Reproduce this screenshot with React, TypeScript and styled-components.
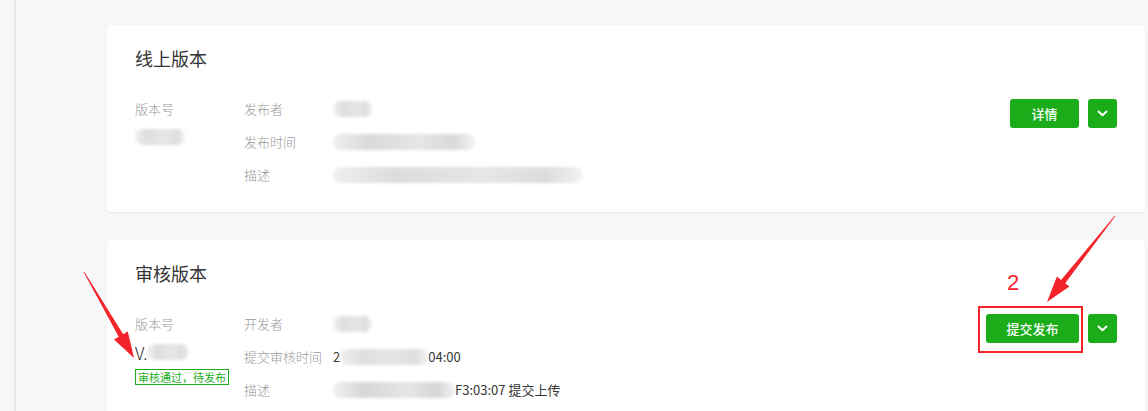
import styled, { createGlobalStyle } from "styled-components";

const GlobalStyle = createGlobalStyle`
  html, body {
    margin: 0;
    padding: 0;
    background: #f6f7f9;
    font-family: "Noto Sans CJK SC", "Noto Sans", sans-serif;
    overflow: hidden;
  }
`;

interface IBlurProps {
  $w: number;
  $shade?: string;
}

interface IRow {
  label: string;
  value: React.ReactNode;
}

// builds a tapered annotation arrow from tail to tip
const arrowPoints = (x1: number, y1: number, x2: number, y2: number) => {
  const dx = x2 - x1;
  const dy = y2 - y1;
  const len = Math.sqrt(dx * dx + dy * dy);
  const ux = dx / len;
  const uy = dy / len;
  const nx = -uy;
  const ny = ux;
  const headLen = 26;
  const headW = 8;
  const shaftW = 2.6;
  const bx = x2 - ux * headLen;
  const by = y2 - uy * headLen;
  const pts = [
    [x1 + nx * 0.4, y1 + ny * 0.4],
    [bx + nx * shaftW, by + ny * shaftW],
    [bx + nx * headW, by + ny * headW],
    [x2, y2],
    [bx - nx * headW, by - ny * headW],
    [bx - nx * shaftW, by - ny * shaftW],
    [x1 - nx * 0.4, y1 - ny * 0.4],
  ];
  return pts.map((p) => p[0].toFixed(1) + "," + p[1].toFixed(1)).join(" ");
};

const Chevron = () => (
  <svg width="11" height="7" viewBox="0 0 11 7">
    <path
      d="M1.5 1.5 L5.5 5.3 L9.5 1.5"
      stroke="#fff"
      strokeWidth="2"
      fill="none"
      strokeLinecap="round"
      strokeLinejoin="round"
    />
  </svg>
);

const VersionCard = ({
  title,
  version,
  tag,
  rows,
  action,
  marked,
}: {
  title: string;
  version: React.ReactNode;
  tag?: string;
  rows: IRow[];
  action: string;
  marked?: boolean;
}) => (
  <Card>
    <CardTitle>{title}</CardTitle>
    <CardBody>
      <VersionCol>
        <Label>版本号</Label>
        <VersionValue>{version}</VersionValue>
        {tag && <StatusTag>{tag}</StatusTag>}
      </VersionCol>
      <InfoGrid>
        {rows.map((r) => (
          <InfoRow key={r.label}>
            <Label>{r.label}</Label>
            <Value>{r.value}</Value>
          </InfoRow>
        ))}
      </InfoGrid>
      <Actions>
        <MarkBox $marked={!!marked}>
          <PrimaryButton $wide={action.length > 2}>{action}</PrimaryButton>
        </MarkBox>
        <MoreButton>
          <Chevron />
        </MoreButton>
      </Actions>
    </CardBody>
  </Card>
);

export default function App() {
  return (
    <>
      <GlobalStyle />
      <Page>
        <SideLine />
        <Content>
          <VersionCard
            title="线上版本"
            version={<Blur $w={50} />}
            rows={[
              { label: "发布者", value: <Blur $w={39} /> },
              {
                label: "发布时间",
                value: <Blur $w={142} $shade="#d9d9d9" />,
              },
              {
                label: "描述",
                value: <Blur $w={250} $shade="#dcdcdc" />,
              },
            ]}
            action="详情"
          />
          <VersionCard
            title="审核版本"
            version={
              <>
                V.<Blur $w={42} />
              </>
            }
            tag="审核通过，待发布"
            rows={[
              { label: "开发者", value: <Blur $w={39} /> },
              {
                label: "提交审核时间",
                value: (
                  <>
                    2<Blur $w={88} />
                    04:00
                  </>
                ),
              },
              {
                label: "描述",
                value: (
                  <>
                    <Blur $w={122} $shade="#d6d6d6" />
                    F3:03:07 提交上传
                  </>
                ),
              },
            ]}
            action="提交发布"
            marked
          />
        </Content>
        <Annotations width="1148" height="411" viewBox="0 0 1148 411">
          <polygon points={arrowPoints(84, 272, 134, 358)} fill="#f3242a" />
          <polygon points={arrowPoints(1115, 216, 1047, 302)} fill="#f3242a" />
        </Annotations>
        <StepNumber>2</StepNumber>
      </Page>
    </>
  );
}

const Page = styled.div`
  position: relative;
  display: flex;
  width: 1148px;
  height: 411px;
  overflow: hidden;
`;

const SideLine = styled.div`
  width: 14px;
  flex-shrink: 0;
  border-right: 2px solid #e8e9eb;
`;

const Content = styled.div`
  flex: 1;
  display: flex;
  flex-direction: column;
  gap: 28px;
  padding: 25px 3px 0 91px;
`;

const Card = styled.section`
  background: #fff;
  border-radius: 4px;
  box-shadow: 0 1px 2px rgba(0, 0, 0, 0.07);
  padding: 21px 28px 21px 28px;
`;

const CardTitle = styled.h2`
  margin: 0 0 22px;
  font-size: 18px;
  line-height: 24px;
  font-weight: 400;
  color: #353535;
`;

const CardBody = styled.div`
  display: flex;
  align-items: flex-start;
`;

const VersionCol = styled.div`
  width: 109px;
  display: flex;
  flex-direction: column;
  align-items: flex-start;
`;

const Label = styled.span`
  font-size: 13px;
  line-height: 33px;
  font-weight: 300;
  color: #999;
  white-space: nowrap;
`;

const VersionValue = styled.div`
  display: flex;
  align-items: center;
  height: 24px;
  font-size: 17px;
  font-weight: 300;
  color: #222;
`;

const StatusTag = styled.span`
  margin-top: 5px;
  padding: 0 2px;
  font-size: 11px;
  line-height: 14px;
  color: #1aad19;
  border: 1px solid #1aad19;
  white-space: nowrap;
`;

const InfoGrid = styled.div`
  display: flex;
  flex-direction: column;
`;

const InfoRow = styled.div`
  display: grid;
  grid-template-columns: 89px 1fr;
  height: 33px;
  align-items: center;
`;

const Value = styled.span`
  display: flex;
  align-items: center;
  font-size: 13px;
  color: #353535;
  white-space: nowrap;
`;

const Blur = styled.span<IBlurProps>`
  display: inline-block;
  width: ${(props) => props.$w}px;
  height: 16px;
  border-radius: 8px;
  background: linear-gradient(
    90deg,
    #f0f0f0 0%,
    ${(props) => props.$shade || "#dedede"} 25%,
    #e6e6e6 60%,
    ${(props) => props.$shade || "#dedede"} 85%,
    #f2f2f2 100%
  );
  filter: blur(1.5px);
`;

const Actions = styled.div`
  margin-left: auto;
  margin-top: 7px;
  display: flex;
  align-items: center;
  gap: 9px;
`;

const MarkBox = styled.div<{ $marked: boolean }>`
  display: flex;
  padding: ${(props) => (props.$marked ? "6px 2px 8px 6px" : "0")};
  margin: ${(props) => (props.$marked ? "-8px -4px -10px -8px" : "0")};
  border: ${(props) => (props.$marked ? "2px solid #f3242a" : "none")};
`;

const PrimaryButton = styled.button<{ $wide: boolean }>`
  width: ${(props) => (props.$wide ? "93px" : "69px")};
  height: 29px;
  border: none;
  border-radius: 3px;
  background: #1aad19;
  color: #fff;
  font-family: "Noto Sans CJK SC", sans-serif;
  font-size: 13px;
  font-weight: 500;
  cursor: pointer;
`;

const MoreButton = styled.button`
  width: 29px;
  height: 29px;
  border: none;
  border-radius: 3px;
  background: #1aad19;
  display: flex;
  align-items: center;
  justify-content: center;
  padding: 0;
  cursor: pointer;
`;

const Annotations = styled.svg`
  position: absolute;
  left: 0;
  top: 0;
  pointer-events: none;
`;

const StepNumber = styled.span`
  position: absolute;
  left: 1007px;
  top: 270px;
  font-family: "Liberation Sans", sans-serif;
  font-size: 22px;
  line-height: 26px;
  color: #f3242a;
`;
